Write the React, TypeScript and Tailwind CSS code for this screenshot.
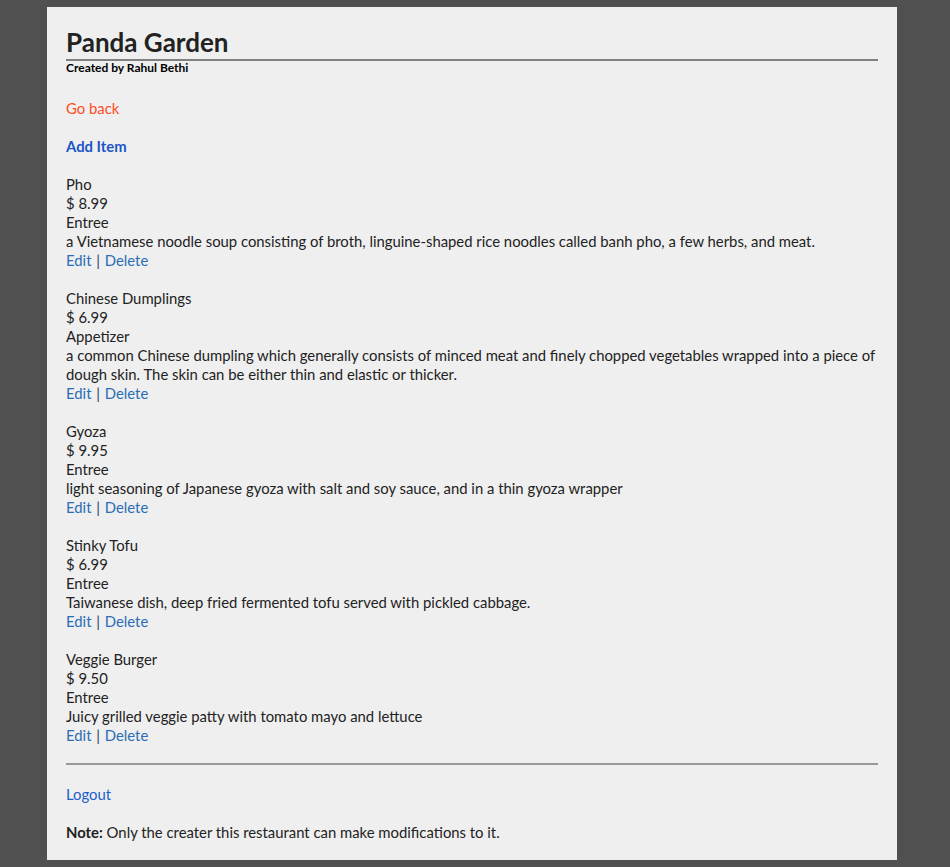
const items = [
  {
    name: "Pho",
    price: "8.99",
    type: "Entree",
    desc: "a Vietnamese noodle soup consisting of broth, linguine-shaped rice noodles called banh pho, a few herbs, and meat.",
  },
  {
    name: "Chinese Dumplings",
    price: "6.99",
    type: "Appetizer",
    desc: "a common Chinese dumpling which generally consists of minced meat and finely chopped vegetables wrapped into a piece of dough skin. The skin can be either thin and elastic or thicker.",
  },
  {
    name: "Gyoza",
    price: "9.95",
    type: "Entree",
    desc: "light seasoning of Japanese gyoza with salt and soy sauce, and in a thin gyoza wrapper",
  },
  {
    name: "Stinky Tofu",
    price: "6.99",
    type: "Entree",
    desc: "Taiwanese dish, deep fried fermented tofu served with pickled cabbage.",
  },
  {
    name: "Veggie Burger",
    price: "9.50",
    type: "Entree",
    desc: "Juicy grilled veggie patty with tomato mayo and lettuce",
  },
];

export default function App() {
  return (
    <div className="min-h-[867px] bg-[#505050] pt-[7px] pb-[7px] font-['Lato','Open_Sans',sans-serif] text-[14.85px] leading-[19px] text-[#222]">
      <div className="ml-[47px] w-[850px] bg-[#efefef] px-[19px] pt-[22px] pb-[18px]">
        <h1 className="text-[26px] font-bold leading-[26px] text-[#222]">Panda Garden</h1>
        <hr className="mt-[4px] border-t-2 border-[#808080]" />
        <p className="text-[12px] font-bold leading-[14px] text-black">Created by Rahul Bethi</p>

        <a href="#" className="mt-[24px] block text-[#ff4c1f]">Go back</a>
        <a href="#" className="mt-[19px] block font-bold text-[#1a56c6]">Add Item</a>

        <div className="mt-[19px] flex flex-col gap-[19px]">
          {items.map((item) => (
            <div key={item.name}>
              <div>{item.name}</div>
              <div>$ {item.price}</div>
              <div>{item.type}</div>
              <div>{item.desc}</div>
              <div>
                <a href="#" className="text-[#2a6db5]">Edit</a>
                <span className="px-[1px] text-[#1d3f6e]"> | </span>
                <a href="#" className="text-[#2a6db5]">Delete</a>
              </div>
            </div>
          ))}
        </div>

        <hr className="mt-[18px] border-t-2 border-[#999]" />
        <a href="#" className="mt-[20px] block text-[#1f5fc9]">Logout</a>
        <p className="mt-[19px]">
          <b>Note:</b> Only the creater this restaurant can make modifications to it.
        </p>
      </div>
    </div>
  );
}
